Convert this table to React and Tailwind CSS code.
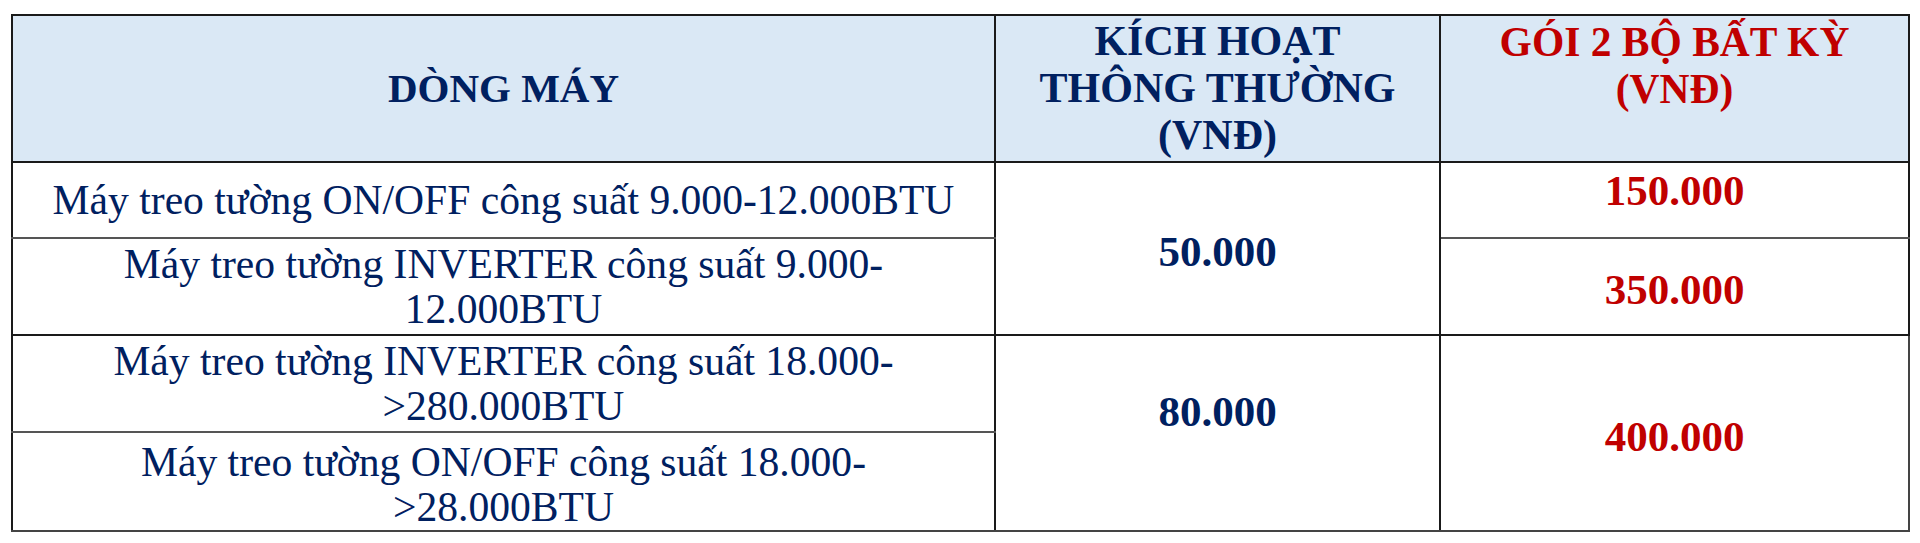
import React from "react";

const navy = "text-[#002060]";
const red = "text-[#c00000]";

function App() {
  const cell = "border-2 border-[#1a1a1a] text-center align-middle p-0";
  return (
    <div className="w-[1920px] h-[543px] bg-white pt-[14px] pl-[11px] font-['Liberation_Serif','Times_New_Roman',serif]">
      <table className="table-fixed border-collapse w-[1897px]">
        <colgroup>
          <col className="w-[983px]" />
          <col className="w-[445px]" />
          <col className="w-[469px]" />
        </colgroup>
        <thead>
          <tr className="h-[147px] bg-[#dae8f5]">
            <th className={`${cell} ${navy} text-[41px] font-bold leading-[47px]`}>DÒNG MÁY</th>
            <th className={`${cell} ${navy} text-[42px] font-bold leading-[47px]`}>
              KÍCH HOẠT
              <br />
              THÔNG THƯỜNG
              <br />
              (VNĐ)
            </th>
            <th className={`${cell} ${red} text-[41.5px] font-bold leading-[47px] !align-top pt-[3px]`}>
              GÓI 2 BỘ BẤT KỲ
              <br />
              (VNĐ)
            </th>
          </tr>
        </thead>
        <tbody className={`${navy} text-[41.6px] leading-[45px]`}>
          <tr className="h-[76px]">
            <td className={`${cell} border-b-[#555]`}>Máy treo tường ON/OFF công suất 9.000-12.000BTU</td>
            <td rowSpan={2} className={`${cell} text-[43px] font-bold pt-[5px]`}>50.000</td>
            <td className={`${cell} ${red} text-[43px] font-bold pb-[19px] border-b-[#555]`}>150.000</td>
          </tr>
          <tr className="h-[97px]">
            <td className={`${cell} border-t-[#555]`}>
              Máy treo tường INVERTER công suất 9.000-
              <br />
              12.000BTU
            </td>
            <td className={`${cell} ${red} text-[43px] font-bold pt-[5px] border-t-[#555]`}>350.000</td>
          </tr>
          <tr className="h-[97px]">
            <td className={`${cell} border-b-[#555]`}>
              Máy treo tường INVERTER công suất 18.000-
              <br />
              &gt;280.000BTU
            </td>
            <td rowSpan={2} className={`${cell} text-[43px] font-bold pb-[44px] border-b-[#444]`}>80.000</td>
            <td rowSpan={2} className={`${cell} ${red} text-[43px] font-bold pt-[6px] border-b-[#444] border-r-[#444]`}>400.000</td>
          </tr>
          <tr className="h-[99px]">
            <td className={`${cell} pt-[6px] border-t-[#555] border-b-[#444]`}>
              Máy treo tường ON/OFF công suất 18.000-
              <br />
              &gt;28.000BTU
            </td>
          </tr>
        </tbody>
      </table>
    </div>
  );
}

export default App;
